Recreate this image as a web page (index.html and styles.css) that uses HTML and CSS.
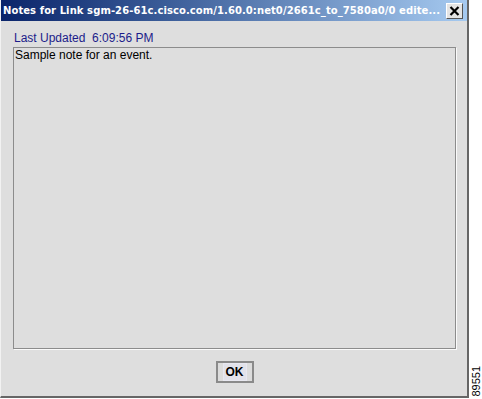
FILE: index.html
```html
<!DOCTYPE html>
<html lang="en">
<head>
    <meta charset="UTF-8">
    <title>Notes for Link</title>
    <link rel="stylesheet" href="styles.css">
</head>
<body>
<div class="page">
    <div class="dialog">
        <div class="titlebar">
            <span class="title">Notes for Link sgm-26-61c.cisco.com/1.60.0:net0/2661c_to_7580a0/0 edite...</span>
            <span class="close">
                <svg width="11" height="10" viewBox="0 0 11 10">
                    <path d="M1.5 1 L9.5 9 M9.5 1 L1.5 9" stroke="#000" stroke-width="2.2"/>
                </svg>
            </span>
        </div>
        <div class="content">
            <div class="updated">Last Updated&nbsp; 6:09:56 PM</div>
            <div class="notes">Sample note for an event.</div>
            <div class="buttons">
                <button class="ok"><span>OK</span></button>
            </div>
        </div>
    </div>
    <div class="side"><span>89551</span></div>
</div>
</body>
</html>
```

FILE: styles.css
```css
* {
    margin: 0;
    padding: 0;
    box-sizing: border-box;
}

body {
    background: #fff;
    font-family: "Liberation Sans", Arial, sans-serif;
}

.page {
    display: flex;
    width: 482px;
    height: 399px;
}

.dialog {
    width: 469px;
    height: 398px;
    background: #dedede;
    border-left: 1px solid #f2f2f2;
    border-right: 2px solid #666;
    border-bottom: 2px solid #666;
    display: flex;
    flex-direction: column;
}

.titlebar {
    height: 21px;
    display: flex;
    align-items: center;
    justify-content: space-between;
    gap: 4px;
    padding: 0 4px 0 2px;
    background: linear-gradient(to right, #0a246a, #3a5c98 35%, #a6caf0);
}

.title {
    color: #fff;
    font-family: "DejaVu Sans", Verdana, sans-serif;
    font-weight: bold;
    font-size: 10px;
    letter-spacing: 0.08px;
    white-space: nowrap;
}

.close {
    flex: none;
    width: 17px;
    height: 16px;
    display: flex;
    align-items: center;
    justify-content: center;
    background: #e4e4e4;
    border: 1px solid;
    border-color: #fff #555 #555 #fff;
}

.content {
    flex: 1;
    display: flex;
    flex-direction: column;
    padding: 10px 11px 0 12px;
}

.updated {
    color: #1c1c8a;
    font-size: 12px;
    line-height: 14px;
    padding-left: 1px;
}

.notes {
    margin-top: 2px;
    height: 302px;
    border: 1px solid #8c8c8c;
    box-shadow: 1px 1px 0 #fafafa;
    font-size: 12px;
    line-height: 13px;
    padding: 1px 1px;
    color: #000;
}

.buttons {
    display: flex;
    justify-content: center;
    padding-top: 12px;
}

.ok {
    width: 38px;
    height: 22px;
    background: #dcdcdc;
    border: 2px solid #8a8a8a;
    font-family: "Liberation Sans", Arial, sans-serif;
    font-weight: bold;
    font-size: 12px;
    color: #000;
    display: flex;
    align-items: center;
    justify-content: center;
}

.ok span {
    padding: 1px 2px;
    border: 1px solid #e8e8f0;
    background: #e2e2ea;
}

.side {
    flex: 1;
    display: flex;
    align-items: flex-end;
    justify-content: center;
    padding-bottom: 2px;
}

.side span {
    writing-mode: vertical-rl;
    transform: rotate(180deg);
    font-size: 11px;
    color: #000;
}
```
